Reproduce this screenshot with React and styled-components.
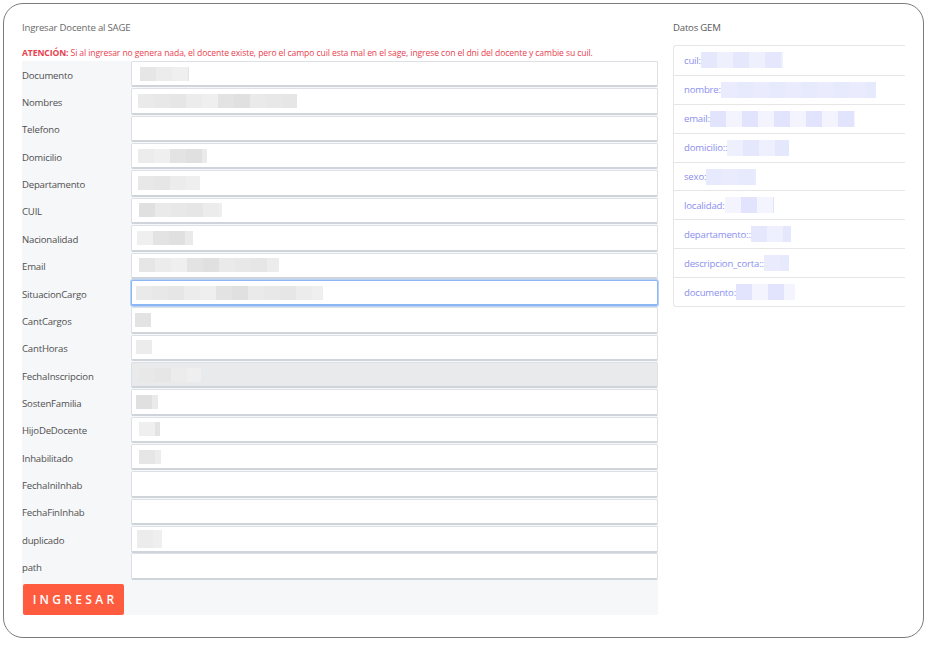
import React from "react";
import styled, { createGlobalStyle } from "styled-components";

const Global = createGlobalStyle`
  html, body { margin: 0; padding: 0; background: #fff; }
  body { font-family: "Open Sans", "Noto Sans", sans-serif; }
  * { box-sizing: border-box; }
`;

const Frame = styled.div`
  margin: 3px 0 0 3px;
  width: 921px;
  height: 635px;
  border: 1.5px solid #7b7b7b;
  border-radius: 20px;
  padding: 17px 0 0 18px;
  display: flex;
  gap: 15px;
  overflow: hidden;
`;

const LeftCol = styled.div`
  width: 636px;
  display: flex;
  flex-direction: column;
`;

const RightCol = styled.div`
  width: 232px;
  display: flex;
  flex-direction: column;
`;

const Title = styled.div`
  font-size: 9.6px;
  line-height: 14px;
  color: #6a6a6a;
  letter-spacing: -0.2px;
`;

const Warning = styled.div`
  margin-top: 13px;
  font-size: 8.6px;
  line-height: 10px;
  color: #e8414f;
  white-space: nowrap;
  letter-spacing: -0.1px;
  b { font-weight: 700; }
`;

const Form = styled.div`
  margin-top: 3px;
  background: #f6f7f9;
  width: 636px;
  display: grid;
  grid-template-columns: 109px 527px;
  grid-auto-rows: 27.37px;
  padding-bottom: 34px;
  position: relative;
`;

const Label = styled.div`
  font-size: 9.6px;
  color: #505050;
  display: flex;
  align-items: center;
  letter-spacing: -0.2px;
  padding-top: 1px;
`;

const Field = styled.div`
  height: 26.4px;
  border: 1px solid ${(p) => (p.$focus ? "#8cb6f4" : "#dde0e4")};
  border-bottom: 2px solid ${(p) => (p.$focus ? "#8cb6f4" : "#cfd4da")};
  box-shadow: ${(p) => (p.$focus ? "0 0 0 1px #b9d2f8" : "none")};
  border-radius: 2px;
  background: ${(p) => (p.$disabled ? "#e9eaec" : "#fff")};
  display: flex;
  align-items: center;
  padding-left: ${(p) => p.$pad || 7}px;
`;

const Blur = styled.div`
  display: flex;
  height: ${(p) => p.$h || 14}px;
`;

const Cell = styled.span`
  display: block;
  height: 100%;
`;

const Button = styled.button`
  position: absolute;
  left: 1px;
  bottom: 0;
  width: 101px;
  height: 31px;
  border: none;
  border-radius: 2px;
  background: #ff5b3e;
  color: #fff;
  font-family: "Open Sans", sans-serif;
  font-size: 12px;
  font-weight: 600;
  letter-spacing: 3.3px;
  padding: 0 0 0 3px;
`;

const GemTitle = styled.div`
  font-size: 9.6px;
  line-height: 14px;
  color: #5a5a5a;
  letter-spacing: -0.2px;
`;

const List = styled.div`
  margin-top: 10px;
  border: 1.5px solid #e6e6e6;
  border-right: none;
  border-radius: 3px 0 0 3px;
`;

const Item = styled.div`
  height: 28.9px;
  display: flex;
  align-items: center;
  padding-left: 10px;
  font-size: 9.6px;
  color: #8b8ff0;
  letter-spacing: -0.2px;
  border-top: ${(p) => (p.$first ? "none" : "1.5px solid #e6e6e6")};
`;

const grays = ["#e6e6e6", "#eaeaea", "#e3e3e3", "#ececec", "#e8e8e8", "#e0e0e0", "#efefef"];
const lav = ["#e5e7fd", "#eaecfd", "#e1e4fc", "#eef0fe", "#e7e9fd", "#f3f4fe"];

function Redacted({ w, h, palette = grays, seed = 0, cell = 16 }) {
  const n = Math.ceil(w / cell);
  const cells = [];
  for (let i = 0; i < n; i++) {
    const cw = i === n - 1 ? w - cell * (n - 1) : cell;
    cells.push(
      <Cell key={i} style={{ width: cw, background: palette[(i * 3 + seed) % palette.length] }} />
    );
  }
  return <Blur $h={h}>{cells}</Blur>;
}

const rows = [
  { label: "Documento", w: 49, pad: 8 },
  { label: "Nombres", w: 159, pad: 6 },
  { label: "Telefono" },
  { label: "Domicilio", w: 69, pad: 6 },
  { label: "Departamento", w: 62, pad: 6 },
  { label: "CUIL", w: 83, pad: 7 },
  { label: "Nacionalidad", w: 56, pad: 5 },
  { label: "Email", w: 140, pad: 7 },
  { label: "SituacionCargo", w: 187, pad: 4, focus: true },
  { label: "CantCargos", w: 16, pad: 3 },
  { label: "CantHoras", w: 16, pad: 4 },
  { label: "FechaInscripcion", w: 62, pad: 7, disabled: true },
  { label: "SostenFamilia", w: 22, pad: 4 },
  { label: "HijoDeDocente", w: 21, pad: 7 },
  { label: "Inhabilitado", w: 22, pad: 7 },
  { label: "FechaIniInhab" },
  { label: "FechaFinInhab" },
  { label: "duplicado", w: 25, pad: 5, h: 18 },
  { label: "path" },
];

const gem = [
  { label: "cuil:", w: 82 },
  { label: "nombre:", w: 155 },
  { label: "email:", w: 145 },
  { label: "domicilio::", w: 62 },
  { label: "sexo:", w: 50 },
  { label: "localidad:", w: 49 },
  { label: "departamento::", w: 40 },
  { label: "descripcion_corta::", w: 25 },
  { label: "documento:", w: 59 },
];

export default function App() {
  return (
    <>
      <Global />
      <Frame>
        <LeftCol>
          <Title>Ingresar Docente al SAGE</Title>
          <Warning>
            <b>ATENCIÓN:</b> Si al ingresar no genera nada, el docente existe, pero el campo cuil esta mal en el sage, ingrese con el dni del docente y cambie su cuil.
          </Warning>
          <Form>
            {rows.map((r, i) => (
              <React.Fragment key={r.label}>
                <Label>{r.label}</Label>
                <Field $focus={r.focus} $disabled={r.disabled} $pad={r.pad}>
                  {r.w ? <Redacted w={r.w} h={r.h || 14} seed={i} /> : null}
                </Field>
              </React.Fragment>
            ))}
            <Button>INGRESAR</Button>
          </Form>
        </LeftCol>
        <RightCol>
          <GemTitle>Datos GEM</GemTitle>
          <List>
            {gem.map((g, i) => (
              <Item key={g.label} $first={i === 0}>
                {g.label}
                <Redacted w={g.w} h={16} palette={lav} seed={i} />
              </Item>
            ))}
          </List>
        </RightCol>
      </Frame>
    </>
  );
}
